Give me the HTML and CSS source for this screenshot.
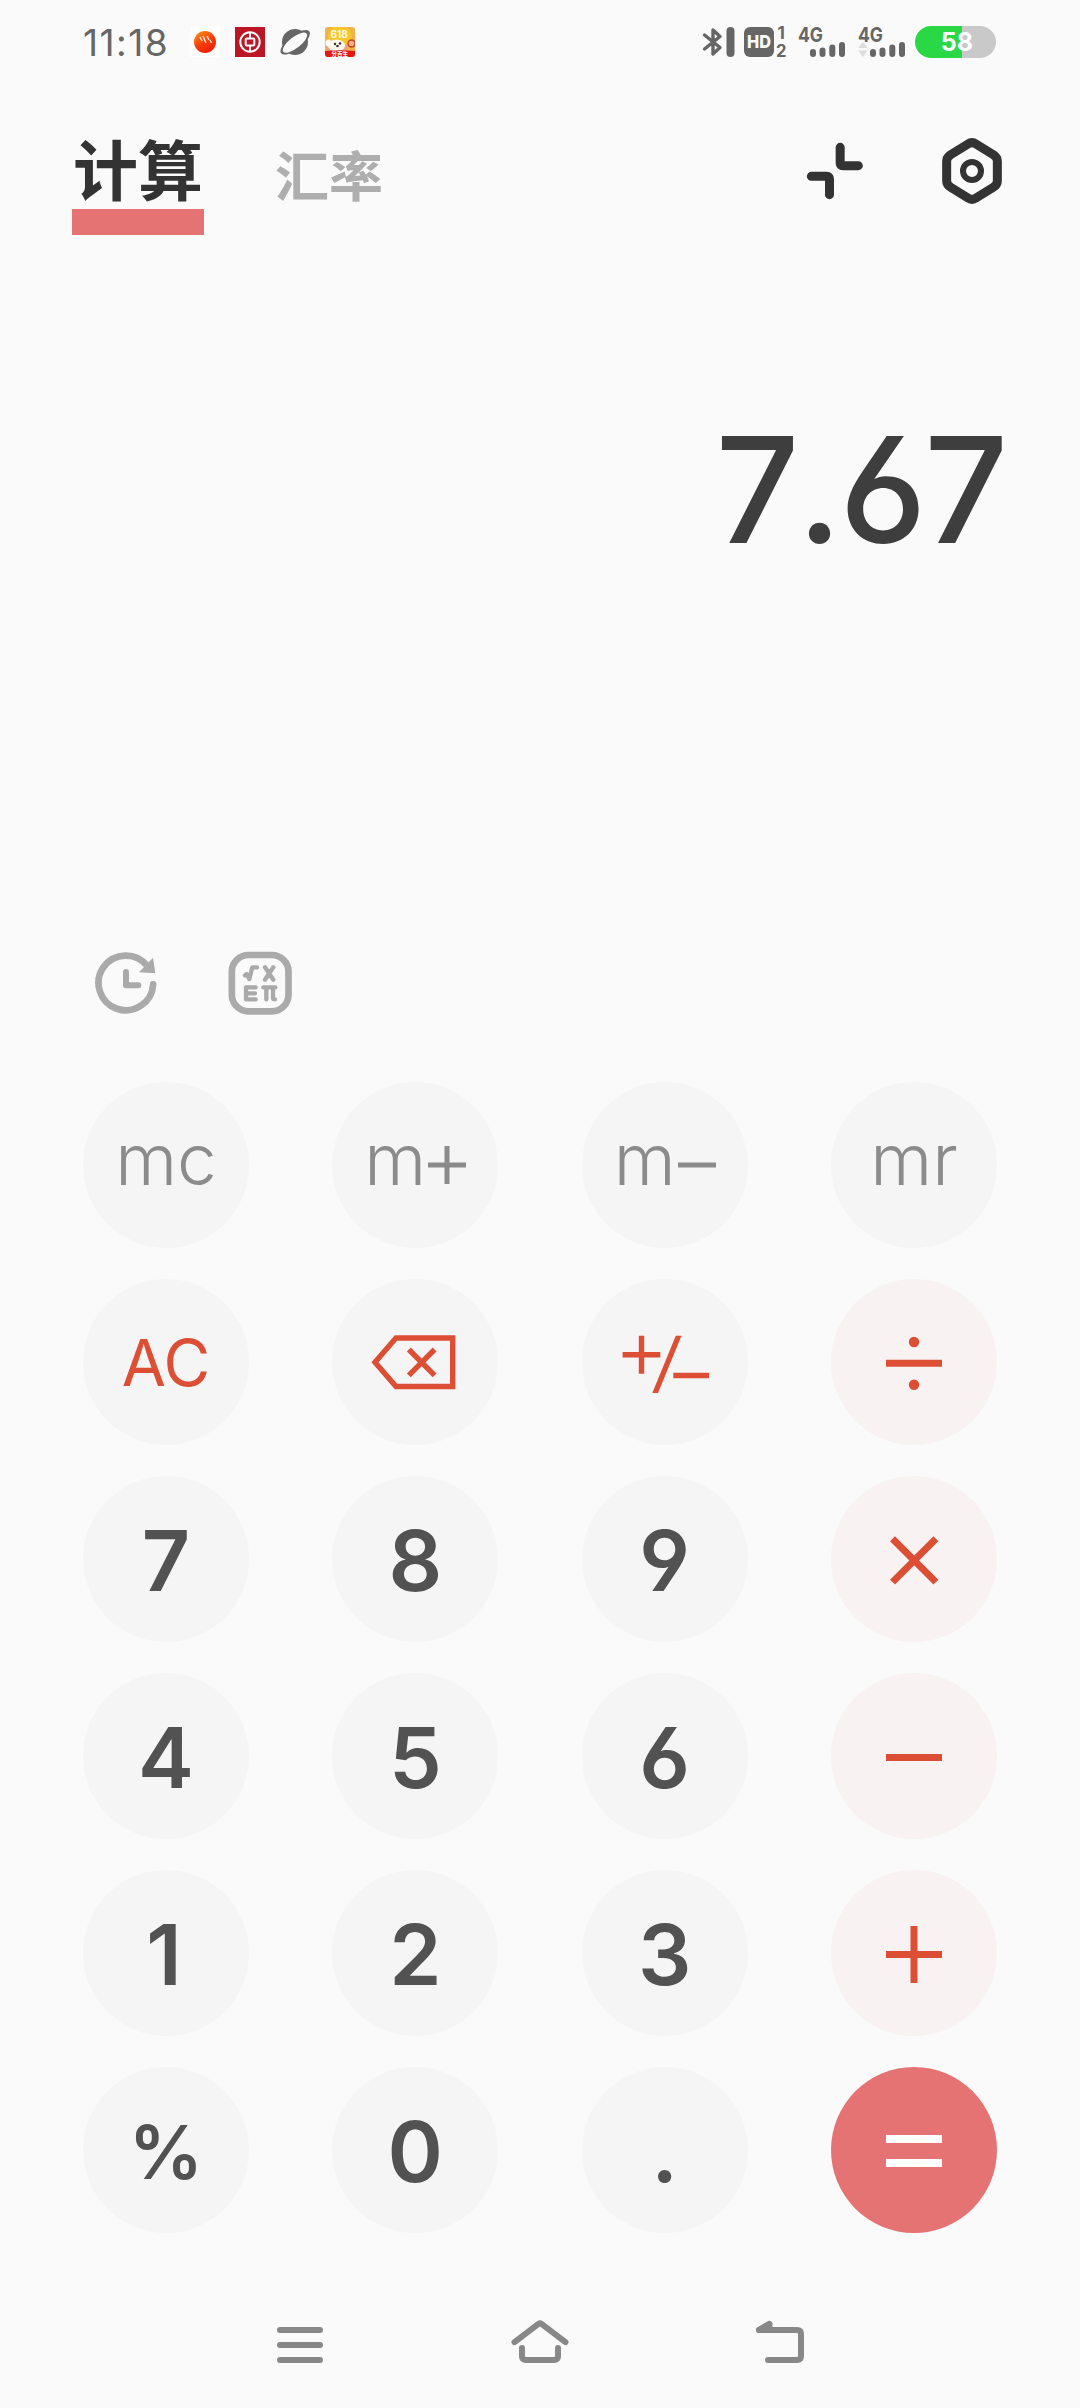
FILE: index.html
```html
<!DOCTYPE html>
<html lang="zh">

<head>
  <meta charset="utf-8" />
  <title>计算器</title>
  <link rel="stylesheet" href="styles.css">
</head>

<body>
  <div class="status">
    <span class="time">11:18</span>
    <svg class="app-icon" viewBox="0 0 30 30">
      <defs>
        <linearGradient id="ball" x1="0" y1="0" x2="0.6" y2="1">
          <stop offset="0" stop-color="#ff9a1f" />
          <stop offset="0.6" stop-color="#f63c08" />
          <stop offset="1" stop-color="#ee2005" />
        </linearGradient>
      </defs>
      <rect width="30" height="30" fill="#fff" />
      <circle cx="15" cy="15" r="11" fill="url(#ball)" />
      <path d="M10 10l2 4M13 9l3 7M17 9l2 4M20 13l1.500 3" stroke="#ffe6cf" stroke-width="1.500" />
    </svg>
    <svg class="app-icon" viewBox="0 0 30 30">
      <rect width="30" height="30" fill="#ba1626" />
      <circle cx="15" cy="15" r="9.700" fill="none" stroke="#fff" stroke-width="2" />
      <path d="M15 5v6M15 19v6" stroke="#fff" stroke-width="2" />
      <rect x="10.700" y="11.500" width="8.600" height="7" rx="1" fill="none" stroke="#fff" stroke-width="2" />
    </svg>
    <svg class="app-icon" viewBox="0 0 30 30">
      <circle cx="15" cy="15" r="13" fill="#666" />
      <ellipse cx="15" cy="15.300" rx="17.800" ry="7" transform="rotate(-38 15 15)" fill="#666" />
      <ellipse cx="14.500" cy="15.500" rx="14.800" ry="5.600" transform="rotate(-38 15 15)" fill="#fafafa" />
    </svg>
    <svg class="app-icon" viewBox="0 0 30 30">
      <rect width="30" height="30" rx="3" fill="#f2b248" />
      <circle cx="15" cy="10" r="12" fill="#f6c62c" />
      <text class="promo" x="5.500" y="10.500">618</text>
      <path d="M0 16q4-4 7 0l15 2v6H2z" fill="#efa080" />
      <ellipse cx="11.500" cy="18.500" rx="8.500" ry="6" fill="#fffaf0" />
      <ellipse cx="3.500" cy="16" rx="3" ry="3.500" fill="#fffaf0" />
      <circle cx="10" cy="17" r="1.200" fill="#333" />
      <circle cx="15" cy="16.500" r="1.200" fill="#333" />
      <circle cx="12.500" cy="19" r="1.300" fill="#333" />
      <circle cx="26.500" cy="16.500" r="3.500" fill="#f7b080" stroke="#c8402a" stroke-width="1.500" />
      <path d="M0 24q15-1.500 30 0v3q0 3-3 3h-24q-3 0-3-3z" fill="#e01a12" />
      <text class="promo-label" x="6.500" y="29.300">分百生</text>
    </svg>

    <svg class="bluetooth" width="33" height="30" viewBox="0 0 33 30">
      <path d="M2.500 8L18 20.500L11 27V3L18 9.500L2.500 22" />
      <path class="pill" d="M28.500 4v22" />
    </svg>
    <svg class="hd" width="46" height="46" viewBox="0 -7 46 46">
      <rect y="1" width="30" height="30" rx="6" fill="#666" />
      <text class="hd-text" x="3" y="22" textLength="24" lengthAdjust="spacingAndGlyphs">HD</text>
      <text class="sim" x="33.500" y="13">1</text>
      <text class="sim" x="32" y="30.500" textLength="10.500" lengthAdjust="spacingAndGlyphs">2</text>
    </svg>
    <svg class="signal" width="47" height="44" viewBox="0 -7 47 44">
      <text class="net" x="0" y="14.500" textLength="25" lengthAdjust="spacingAndGlyphs">4G</text>
      <path d="M15 25v2M24.500 23.500v3.500M34.300 20.500v6.500M44 18v9" />
    </svg>
    <svg class="signal" width="47" height="44" viewBox="0 -7 47 44">
      <text class="net" x="0" y="14.500" textLength="25" lengthAdjust="spacingAndGlyphs">4G</text>
      <path d="M15 25v2M24.500 23.500v3.500M34.300 20.500v6.500M44 18v9" />
      <polygon points="0,21 5,15 9.500,21" />
      <polygon points="0,23.500 5,30 9.500,23.500" />
    </svg>
    <div class="battery">58</div>
  </div>

  <div class="header">
    <div class="tab tab-active">计算</div>
    <div class="tab">汇率</div>
    <svg class="shrink" width="60" height="60" viewBox="75 63 180 180">
      <path d="M180.500 82V129Q180.500 137 188.500 137H235M94 169H140Q148.500 169 148.500 177.500V224" />
    </svg>
    <svg class="setting" width="64" height="70" viewBox="480 48 192 210">
      <path d="M564 72Q576 64 588 72L640 104Q652 112 652 123V183Q652 194 640 202L588 234Q576 242 564 234L512 202Q500 194 500 183V123Q500 112 512 104Z" />
      <circle cx="576" cy="153" r="27" />
    </svg>
  </div>

  <div class="display">7.67</div>

  <div class="tools">
    <svg width="64" height="64" viewBox="72 62 192 192">
      <path d="M249.500 162A82 82 0 1 1 232 107" stroke-width="20" />
      <path d="M168 125V165H205" stroke-width="18" />
      <polygon points="249,82 207,126 256,129" />
    </svg>
    <svg width="64" height="64" viewBox="476 64 192 192">
      <rect x="487.500" y="76" width="170" height="169" rx="50" stroke-width="20" />
      <path d="M527 137L532 133L540 148L549 113H563M587 113L612 150M612 113L587 150" stroke-width="13" />
      <path d="M559 173H530V209H559M530 191H557M582 173H618M591 174V209M611 174V204Q611 209 617 209" stroke-width="13" />
    </svg>
  </div>

  <div class="keypad">
    <div class="key memory">mc</div>
    <div class="key memory">m<svg width="38" height="38" viewBox="0 0 38 38"><path d="M0 19h38M19 0v38" /></svg></div>
    <div class="key memory">m<svg width="38" height="38" viewBox="0 0 38 38"><path d="M0 19h38" /></svg></div>
    <div class="key memory">mr</div>

    <div class="key clear">AC</div>
    <div class="key">
      <svg class="thin" width="166" height="166" viewBox="0 0 166 166">
        <path d="M43 83.300L64 59H120.700V107.500H64ZM76.800 70.500L102.600 96.300M102.600 70.500L76.800 96.300" />
      </svg>
    </div>
    <div class="key">
      <svg class="thin" width="166" height="166" viewBox="0 0 166 166">
        <path d="M40.600 75.700H78.300M59.500 56.700V94.700M91.300 96.500H127" />
        <polygon points="93.800,56.700 99.500,56.700 76,114 70.300,114" />
      </svg>
    </div>
    <div class="key operator">
      <svg width="166" height="166" viewBox="0 0 166 166">
        <path d="M55 84.200H111" />
        <circle cx="83" cy="63" r="5.200" />
        <circle cx="83" cy="105.700" r="5.200" />
      </svg>
    </div>

    <div class="key">7</div>
    <div class="key">8</div>
    <div class="key">9</div>
    <div class="key operator">
      <svg width="166" height="166" viewBox="0 0 166 166">
        <path d="M61.500 62.700L104.900 106.100M104.900 62.700L61.500 106.100" />
      </svg>
    </div>

    <div class="key">4</div>
    <div class="key">5</div>
    <div class="key">6</div>
    <div class="key operator">
      <svg width="166" height="166" viewBox="0 0 166 166">
        <path d="M55 84.500H111" />
      </svg>
    </div>

    <div class="key one">1</div>
    <div class="key">2</div>
    <div class="key">3</div>
    <div class="key operator">
      <svg width="166" height="166" viewBox="0 0 166 166">
        <path d="M55 84.500H111M83 56V113" />
      </svg>
    </div>

    <div class="key percent">%</div>
    <div class="key">0</div>
    <div class="key">.</div>
    <div class="key equals">
      <svg width="166" height="166" viewBox="0 0 166 166">
        <path d="M55 72H111M55 96H111" />
      </svg>
    </div>
  </div>

  <div class="nav">
    <svg width="60" height="60" viewBox="270 2315 60 60">
      <path d="M280 2330H320M280 2345H320M280 2360H320" />
    </svg>
    <svg width="60" height="60" viewBox="510 2315 60 60">
      <path d="M514.500 2342.200L538.500 2323.900Q540 2322.800 541.500 2323.900L565.500 2342.200M522 2348V2356Q522 2360 526 2360H554Q558 2360 558 2356V2348" />
    </svg>
    <svg width="60" height="60" viewBox="750 2315 60 60">
      <path d="M769.500 2324L759 2330H797Q801 2330 801 2334V2356Q801 2360 797 2360H768" />
      <polygon points="759,2330 769,2324 770,2330" />
    </svg>
  </div>
</body>

</html>
```
FILE: styles.css
```css
body {
  margin: 0;
  width: 1080px;
  height: 2408px;
  background: #fafafa;
  font-family: Inter, "Noto Sans CJK SC", sans-serif;
  overflow: hidden;
}

svg {
  display: block;
  flex-shrink: 0;
}

/* status bar */
.status {
  display: flex;
  align-items: center;
  height: 84px;
  padding: 0 84px 0 83px;
  color: #666;
}

.time {
  width: 92px;
  font-size: 37px;
  letter-spacing: 1.5px;
}

.app-icon {
  width: 30px;
  height: 30px;
  margin-left: 15px;
}

.promo {
  font: 700 10px Inter, sans-serif;
  fill: #fffbe0;
}

.promo-label {
  font: 700 5.5px "Noto Sans CJK SC", sans-serif;
  fill: #fff;
}

.bluetooth {
  margin-left: auto;
  margin-right: 9px;
  fill: none;
  stroke: #666;
  stroke-width: 3.4;
  stroke-linecap: round;
  stroke-linejoin: round;
}

.bluetooth .pill {
  stroke-width: 8;
}

.hd {
  margin-right: 8px;
}

.hd-text {
  font: 800 18px Inter, sans-serif;
  fill: #fafafa;
}

.sim {
  font: 700 17px Inter, sans-serif;
  fill: #666;
}

.signal {
  margin-right: 13px;
  fill: #666;
  stroke: #666;
  stroke-width: 6;
  stroke-linecap: round;
}

.signal:nth-last-child(2) {
  margin-right: 10px;
}

.signal polygon {
  fill: #ddd;
  stroke: none;
}

.net {
  font: 700 20px Inter, sans-serif;
  stroke: none;
}

.battery {
  width: 81px;
  height: 32px;
  border-radius: 16px;
  background: linear-gradient(to right, #2ad745 47px, #c9c9c9 47px);
  color: #fff;
  font-size: 25px;
  font-weight: 700;
  line-height: 32px;
  text-align: center;
  text-indent: 3px;
}

/* tabs */
.header {
  display: flex;
  height: 151px;
  padding: 0 76px 0 72px;
}

.tab {
  margin-left: 71px;
  padding-top: 50px;
  height: 80px;
  font-family: "Noto Sans CJK SC", sans-serif;
  font-size: 54px;
  font-weight: 700;
  line-height: 80px;
  color: #aeaeae;
}

.tab-active {
  width: 132px;
  height: 104px;
  margin-left: 0;
  padding-top: 21px;
  border-bottom: 26px solid #e57373;
  font-size: 65px;
  line-height: 124px;
  text-align: center;
  white-space: nowrap;
  color: #333;
}

.shrink {
  margin: 57px 75px 0 auto;
  fill: none;
  stroke: #333;
  stroke-width: 27;
  stroke-linecap: round;
}

.setting {
  margin-top: 52px;
  fill: none;
  stroke: #333;
  stroke-width: 27;
}

.setting circle {
  stroke-width: 18;
}

/* result */
.display {
  height: 510px;
  padding: 165px 74px 0 0;
  color: #3e3e3e;
  font-size: 147px;
  font-weight: 500;
  letter-spacing: -2.3px;
  line-height: 180px;
  text-align: right;
  font-kerning: none;
  font-feature-settings: "cv03", "cv04";
}

.tools {
  display: flex;
  gap: 70px;
  height: 131px;
  padding: 41px 0 0 94px;
}

.tools svg {
  fill: none;
  stroke: #aaa;
  stroke-linecap: round;
  stroke-linejoin: round;
}

.tools polygon {
  fill: #aaa;
  stroke: none;
}

/* keys */
.keypad {
  display: grid;
  grid-template-columns: repeat(4, 166px);
  justify-content: space-between;
  row-gap: 31px;
  height: 1151px;
  padding: 0 83px;
}

.key {
  display: flex;
  justify-content: center;
  box-sizing: border-box;
  height: 166px;
  padding-top: 2px;
  border-radius: 50%;
  background: #f5f5f5;
  color: #525252;
  font-size: 84px;
  font-weight: 600;
  line-height: 166px;
  font-feature-settings: "cv03", "cv04";
}

.key svg {
  margin-top: -2px;
  fill: #dc4f34;
  stroke: #dc4f34;
  stroke-width: 7;
}

.key circle,
.key polygon {
  stroke: none;
}

.key .thin {
  stroke-width: 5.4;
}

.key .thin path {
  fill: none;
}

.one {
  padding-right: 4px;
}

.memory {
  padding-top: 0;
  color: #8b8b8b;
  font-size: 71px;
  font-weight: 300;
  line-height: 155px;
}

.memory svg {
  margin: 64px 0 0 2px;
  stroke: #8b8b8b;
  stroke-width: 5;
}

.clear {
  padding-top: 1px;
  color: #dc4f34;
  font-size: 64px;
  font-weight: 400;
}

.percent {
  font-size: 74px;
  font-weight: 600;
}

.operator {
  background: #f8f2f2;
}

.equals {
  background: #e57373;
}

.equals svg {
  stroke: #fff;
  stroke-width: 8;
}

/* navigation bar */
.nav {
  display: flex;
  justify-content: space-between;
  padding: 82px 270px 0;
}

.nav svg {
  fill: none;
  stroke: #888;
  stroke-width: 6;
  stroke-linecap: round;
  stroke-linejoin: round;
}

.nav polygon {
  fill: #888;
}
```
